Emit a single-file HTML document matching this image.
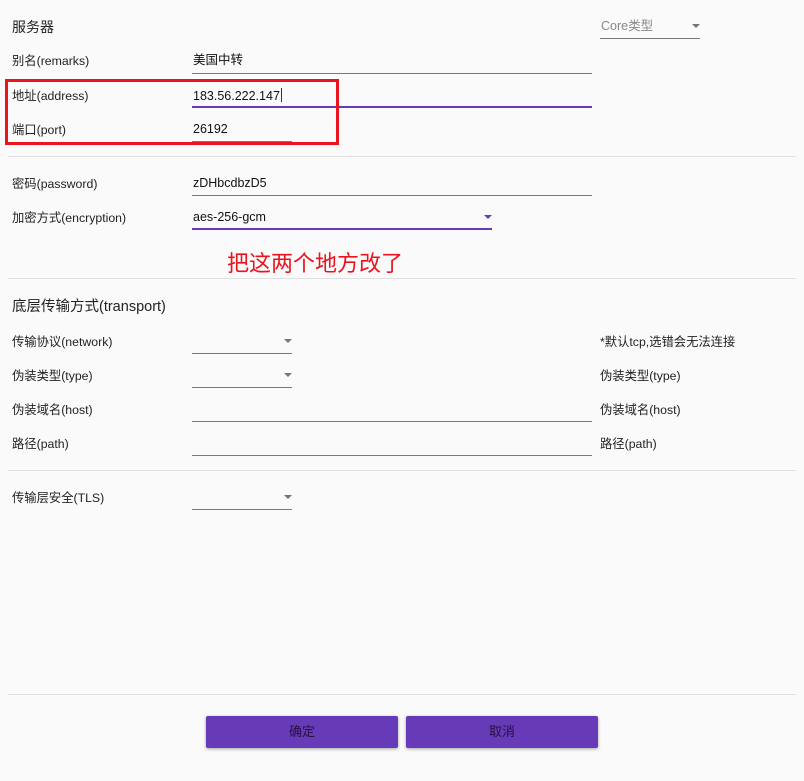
<!DOCTYPE html>
<html><head><meta charset="utf-8"><style>
*{margin:0;padding:0;box-sizing:border-box}
body{width:804px;height:781px;background:#fafafa;position:relative;overflow:hidden;font-family:"Liberation Sans","Noto Sans CJK SC",sans-serif;color:#222}
.t{position:absolute;font-size:12.3px;line-height:14px;white-space:nowrap}
.v{position:absolute;font-size:12.5px;line-height:14px;white-space:nowrap;color:#111}
.l{position:absolute;height:1px;background:#7a7a7a;z-index:2}
.p{position:absolute;height:2px;background:#673ab7}
.d{position:absolute;height:1px;background:#e0e0e0;left:8px;width:788px}
.a{position:absolute;width:0;height:0;border-left:4px solid transparent;border-right:4px solid transparent;border-top:4px solid #757575}
.b{position:absolute;top:716px;width:192px;height:32px;background:#673ab7;border-radius:2px;box-shadow:0 1px 3px rgba(0,0,0,.35);font-size:13px;line-height:32px;text-align:center;color:#2a1040}
</style></head><body>
<div class="t" style="left:12px;top:19px;font-size:14px;line-height:16px">服务器</div>
<div class="t" style="left:601px;top:19px;color:#888;font-size:12.5px">Core类型</div>
<div class="a" style="left:692px;top:24px"></div>
<div class="l" style="left:600px;top:38px;width:100px"></div>

<div class="t" style="left:12px;top:54px">别名(remarks)</div>
<div class="v" style="left:193px;top:53px">美国中转</div>
<div class="l" style="left:192px;top:73px;width:400px"></div>

<div class="t" style="left:12px;top:89px">地址(address)</div>
<div class="v" style="left:193px;top:88px">183.56.222.147<span style="display:inline-block;width:1px;height:14px;background:#333;vertical-align:-2px;margin-left:1px"></span></div>
<div class="p" style="left:192px;top:106px;width:400px"></div>

<div class="t" style="left:12px;top:123px">端口(port)</div>
<div class="v" style="left:193px;top:122px">26192</div>
<div class="l" style="left:192px;top:141px;width:100px"></div>

<div style="position:absolute;left:5px;top:79px;width:334px;height:66px;border:3px solid #e8141e"></div>

<div class="d" style="top:156px"></div>

<div class="t" style="left:12px;top:177px">密码(password)</div>
<div class="v" style="left:193px;top:176px">zDHbcdbzD5</div>
<div class="l" style="left:192px;top:195px;width:400px"></div>

<div class="t" style="left:12px;top:211px">加密方式(encryption)</div>
<div class="v" style="left:193px;top:210px">aes-256-gcm</div>
<div class="a" style="left:484px;top:215px;border-top-color:#673ab7"></div>
<div class="p" style="left:192px;top:228px;width:300px"></div>

<div class="t" style="left:227px;top:251px;font-size:22px;line-height:26px;color:#e8141e">把这两个地方改了</div>

<div class="d" style="top:278px"></div>

<div class="t" style="left:12px;top:299px;font-size:14.5px;line-height:17px">底层传输方式(transport)</div>

<div class="t" style="left:12px;top:335px">传输协议(network)</div>
<div class="a" style="left:284px;top:339px"></div>
<div class="l" style="left:192px;top:353px;width:100px"></div>
<div class="t" style="left:600px;top:335px">*默认tcp,选错会无法连接</div>

<div class="t" style="left:12px;top:369px">伪装类型(type)</div>
<div class="a" style="left:284px;top:373px"></div>
<div class="l" style="left:192px;top:387px;width:100px"></div>
<div class="t" style="left:600px;top:369px">伪装类型(type)</div>

<div class="t" style="left:12px;top:403px">伪装域名(host)</div>
<div class="l" style="left:192px;top:421px;width:400px"></div>
<div class="t" style="left:600px;top:403px">伪装域名(host)</div>

<div class="t" style="left:12px;top:437px">路径(path)</div>
<div class="l" style="left:192px;top:455px;width:400px"></div>
<div class="t" style="left:600px;top:437px">路径(path)</div>

<div class="d" style="top:470px"></div>

<div class="t" style="left:12px;top:491px">传输层安全(TLS)</div>
<div class="a" style="left:284px;top:495px"></div>
<div class="l" style="left:192px;top:509px;width:100px"></div>

<div class="d" style="top:694px"></div>

<div class="b" style="left:206px">确定</div>
<div class="b" style="left:406px">取消</div>
</body></html>
